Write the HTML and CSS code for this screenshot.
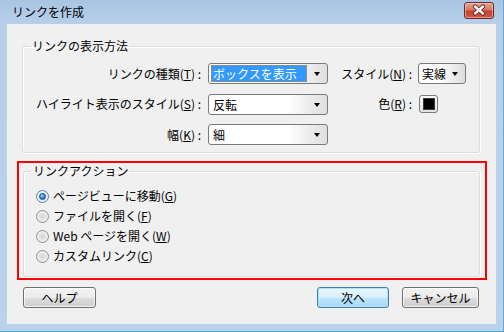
FILE: index.html
```html
<!DOCTYPE html>
<html lang="ja">
<head>
<meta charset="utf-8">
<title>リンクを作成</title>
<link rel="stylesheet" href="styles.css">
</head>
<body>
<div class="window">
  <div class="titlebar">
    <span class="title">リンクを作成</span>
    <span class="close">
      <svg width="30" height="17" viewBox="0 0 30 17">
        <path d="M11 4.5 L19 11.5 M19 4.5 L11 11.5" stroke="#6b1d1d" stroke-width="4.2" stroke-linecap="round" fill="none"/>
        <path d="M11 4.5 L19 11.5 M19 4.5 L11 11.5" stroke="#ffffff" stroke-width="2.4" stroke-linecap="round" fill="none"/>
      </svg>
    </span>
  </div>
  <div class="client">
    <fieldset class="group group-appearance">
      <legend>リンクの表示方法</legend>
      <div class="grid">
        <span class="lbl">リンクの種類(<u>T</u>) :</span>
        <div class="combo"><span class="val selected">ボックスを表示</span><span class="arrow"></span></div>
        <span class="lbl lbl2">スタイル(<u>N</u>) :</span>
        <div class="combo small"><span class="val">実線</span><span class="arrow"></span></div>

        <span class="lbl">ハイライト表示のスタイル(<u>S</u>) :</span>
        <div class="combo"><span class="val">反転</span><span class="arrow"></span></div>
        <span class="lbl lbl2">色(<u>R</u>) :</span>
        <div class="colorcell"><span class="colorbtn"><span class="swatch"></span></span></div>

        <span class="lbl">幅(<u>K</u>) :</span>
        <div class="combo"><span class="val">細</span><span class="arrow"></span></div>
        <span></span>
        <span></span>
      </div>
    </fieldset>

    <div class="highlight">
      <fieldset class="group group-action">
        <legend>リンクアクション</legend>
        <div class="radio-row"><span class="radio checked"><span class="dot"></span></span><span>ページビューに移動(<u>G</u>)</span></div>
        <div class="radio-row"><span class="radio"></span><span>ファイルを開く(<u>F</u>)</span></div>
        <div class="radio-row"><span class="radio"></span><span>Web ページを開く(<u>W</u>)</span></div>
        <div class="radio-row"><span class="radio"></span><span>カスタムリンク(<u>C</u>)</span></div>
      </fieldset>
    </div>

    <div class="buttons">
      <button class="btn btn-help">ヘルプ</button>
      <span class="spacer"></span>
      <button class="btn btn-default">次へ</button>
      <button class="btn btn-cancel">キャンセル</button>
    </div>
  </div>
</div>
</body>
</html>
```

FILE: styles.css
```css
* { box-sizing: border-box; }

html, body {
  margin: 0;
  padding: 0;
  width: 504px;
  height: 332px;
  overflow: hidden;
  font-family: "Noto Sans CJK JP", "Noto Sans", sans-serif;
  font-size: 12px;
  color: #000;
}

.window {
  width: 504px;
  height: 332px;
  display: flex;
  flex-direction: column;
  background: linear-gradient(to bottom, #a9c4e2 0px, #b7cfe9 24px, #bad2ea 100%);
  border-right: 1px solid #58b0da;
  border-bottom: 1px solid #4ea9d6;
}

.titlebar {
  height: 24px;
  flex: none;
  display: flex;
  align-items: center;
  padding: 0 9px 0 12px;
}

.title {
  flex: 1;
  font-size: 12px;
  line-height: 16px;
  color: #000;
  margin-top: -1px;
}

.close {
  width: 30px;
  height: 17px;
  margin-top: -3px;
  border: 1px solid #6b2a2a;
  border-radius: 3px;
  background: linear-gradient(to bottom, #e8a493 0%, #d27766 45%, #c4402f 55%, #d05a3f 100%);
  display: flex;
  align-items: center;
  justify-content: center;
  overflow: hidden;
  box-shadow: inset 0 0 0 1px rgba(255, 220, 210, 0.5);
}
.close svg { display: block; margin: -1px; }

.client {
  margin: 0 7px 0 7px;
  height: 300px;
  background: #f0f0f0;
  padding-top: 14px;
  display: flex;
  flex-direction: column;
}

.group {
  border: 1px solid #d5dfe5;
  border-radius: 3px;
  box-shadow: inset 1px 1px 0 #ffffff, 1px 1px 0 #ffffff;
  padding: 0;
  margin: 0;
  min-width: 0;
}

.group legend {
  padding: 0 2px;
  margin-left: 7px;
  line-height: 16px;
  font-size: 12px;
}

.group-appearance {
  margin: 0 16px 0 15px;
  padding: 9px 0 7px 0;
}

.grid {
  display: grid;
  grid-template-columns: 185px 120px 90px 48px;
  grid-auto-rows: 21px;
  row-gap: 9.5px;
  align-items: center;
}

.lbl {
  text-align: right;
  padding-right: 7px;
  line-height: 16px;
  white-space: nowrap;
}
.lbl2 { padding-right: 6px; }

u { text-decoration: underline; text-underline-offset: 1px; }

.combo {
  height: 21px;
  border: 1px solid #7a7a7a;
  border-radius: 3px;
  background: linear-gradient(to right, #ffffff 0%, #ffffff 66%, #dedede 100%);
  display: flex;
  align-items: center;
  padding: 1px;
}
.combo .val {
  flex: 1;
  height: 17px;
  line-height: 17px;
  padding-left: 3px;
  white-space: nowrap;
  overflow: hidden;
}
.combo .val.selected {
  background: #3399ff;
  color: #fff;
  outline: 1px dotted #d9822b;
  outline-offset: -1px;
  margin-left: 1px;
  margin-right: 1px;
  padding-left: 2px;
}
.combo.small {
  background: linear-gradient(to right, #ffffff 0%, #ffffff 45%, #dcdcdc 100%);
}
.combo.small .val { padding-left: 2px; }

.arrow {
  width: 18px;
  flex: none;
  display: flex;
  align-items: center;
  justify-content: center;
}
.arrow::before {
  content: "";
  width: 0;
  height: 0;
  border-left: 3.5px solid transparent;
  border-right: 3.5px solid transparent;
  border-top: 4px solid #000;
  margin-top: 1px;
}

.colorcell {
  height: 21px;
  display: flex;
  align-items: center;
}
.colorbtn {
  width: 19px;
  height: 18px;
  margin-left: 1px;
  border: 1px solid #7a7a7a;
  border-radius: 3px;
  background: linear-gradient(#f7f7f7, #e3e3e3);
  display: flex;
  align-items: center;
  justify-content: center;
}
.swatch {
  width: 12px;
  height: 12px;
  background: #000;
  border: 1px solid #3a3a3a;
}

.highlight {
  margin: 8px 9px 0 10px;
  border: 2px solid #ff0000;
  padding: 0 5px 1px 4px;
}

.group-action {
  padding: 7px 0 10px 0;
}

.radio-row {
  height: 20px;
  display: flex;
  align-items: center;
  gap: 4px;
  padding-left: 12px;
  line-height: 16px;
  white-space: nowrap;
}

.radio {
  width: 13px;
  height: 13px;
  border-radius: 50%;
  border: 1px solid #8e8f8f;
  background: radial-gradient(circle at 50% 50%, #d4d4d4 0%, #e6e6e6 45%, #f8f8f8 100%);
  display: flex;
  align-items: center;
  justify-content: center;
  flex: none;
}
.radio.checked {
  border-color: #5b7fa6;
  background: radial-gradient(circle at 50% 50%, #c8dff3 0%, #e6f1fb 60%, #f4f9fd 100%);
}
.dot {
  width: 7px;
  height: 7px;
  border-radius: 50%;
  background: radial-gradient(circle at 40% 35%, #a8e0ff 0%, #3d95de 45%, #174f98 100%);
  border: 1px solid #1f4e86;
}

.buttons {
  margin: 7px 17px 0 16px;
  display: flex;
  align-items: center;
}
.spacer { flex: 1; }

.btn {
  height: 21px;
  font-family: "Noto Sans CJK JP", "Noto Sans", sans-serif;
  font-size: 12px;
  line-height: 16px;
  padding: 0;
  color: #000;
  border: 1px solid #707070;
  border-radius: 3px;
  background: linear-gradient(to bottom, #f2f2f2 0%, #ebebeb 50%, #dddddd 50%, #cfcfcf 100%);
  box-shadow: inset 0 0 0 1px rgba(255, 255, 255, 0.7);
}
.btn-help { width: 73px; }
.btn-default {
  width: 72px;
  border-color: #3c7fb1;
  background: linear-gradient(to bottom, #eaf6fd 0%, #d9f0fc 50%, #bee6fd 50%, #a7d9f5 100%);
  box-shadow: inset 0 0 0 1px #b4e1fa;
}
.btn-cancel { width: 77px; margin-left: 13px; }
```
